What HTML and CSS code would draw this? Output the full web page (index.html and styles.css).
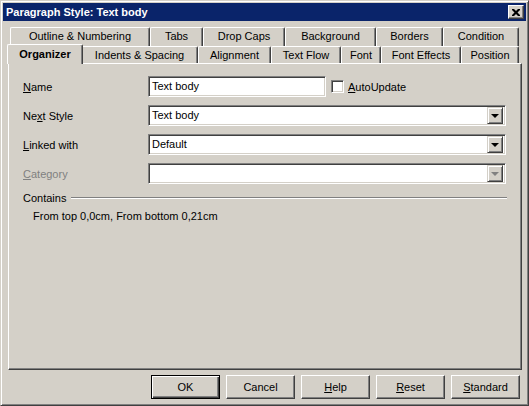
FILE: index.html
```html
<!DOCTYPE html>
<html lang="en">
<head>
    <meta charset="UTF-8">
    <title>Paragraph Style: Text body</title>
    <link rel="stylesheet" href="styles.css">
</head>
<body>
    <div class="window">
        <div class="titlebar">
            <span class="title">Paragraph Style: Text body</span>
            <button class="close" aria-label="Close">
                <svg width="8" height="7" viewBox="0 0 8 7">
                    <path d="M0 0h2l2 2 2-2h2v1l-2.5 2.5L8 6v1H6L4 5 2 7H0V6l2.5-2.5L0 1z" fill="#000"/>
                </svg>
            </button>
        </div>

        <div class="tabs">
            <div class="tabrow back">
                <div class="tab" style="width:140px">Outline &amp; Numbering</div>
                <div class="tab" style="width:53px">Tabs</div>
                <div class="tab" style="width:82px">Drop Caps</div>
                <div class="tab" style="width:91px">Background</div>
                <div class="tab" style="width:67px">Borders</div>
                <div class="tab" style="width:76px">Condition</div>
            </div>
            <div class="tabrow front">
                <div class="tab active" style="width:72px">Organizer</div>
                <div class="tab" style="width:117px">Indents &amp; Spacing</div>
                <div class="tab" style="width:73px">Alignment</div>
                <div class="tab" style="width:70px">Text Flow</div>
                <div class="tab" style="width:40px">Font</div>
                <div class="tab" style="width:80px">Font Effects</div>
                <div class="tab" style="width:58px">Position</div>
            </div>
        </div>

        <div class="panel">
            <div class="form">
                <label class="label"><u>N</u>ame</label>
                <div class="name-row">
                    <div class="field name">Text body</div>
                    <span class="check"></span>
                    <span class="check-label"><u>A</u>utoUpdate</span>
                </div>

                <label class="label">Ne<u>x</u>t Style</label>
                <div class="field combo">
                    <span class="value">Text body</span>
                    <span class="drop"><i class="arrow"></i></span>
                </div>

                <label class="label"><u>L</u>inked with</label>
                <div class="field combo">
                    <span class="value">Default</span>
                    <span class="drop"><i class="arrow"></i></span>
                </div>

                <label class="label disabled"><u>C</u>ategory</label>
                <div class="field combo">
                    <span class="value"></span>
                    <span class="drop"><i class="arrow off"></i></span>
                </div>
            </div>

            <div class="group">
                <span>Contains</span>
                <span class="rule"></span>
            </div>
            <p class="contains">From top 0,0cm, From bottom 0,21cm</p>
        </div>

        <div class="buttons">
            <button class="btn default">OK</button>
            <button class="btn">Cancel</button>
            <button class="btn"><u>H</u>elp</button>
            <button class="btn"><u>R</u>eset</button>
            <button class="btn"><u>S</u>tandard</button>
        </div>
    </div>
</body>
</html>
```

FILE: styles.css
```css
body {
    margin: 0;
    font-family: "Liberation Sans", Arial, sans-serif;
    font-size: 11px;
    color: #000;
    background: #d4d0c8;
}
u {
    text-decoration: underline;
    text-underline-offset: 1px;
}

/* window frame */
.window {
    width: 529px;
    height: 406px;
    box-sizing: border-box;
    padding: 2px;
    background: #d4d0c8;
    border: 1px solid;
    border-color: #d4d0c8 #404040 #404040 #d4d0c8;
    box-shadow: inset 1px 1px #fff, inset -1px -1px #808080;
}
.titlebar {
    height: 18px;
    background: #0a246a;
    display: flex;
    align-items: center;
    justify-content: space-between;
    padding: 0 2px 0 3px;
}
.title {
    color: #fff;
    font-weight: bold;
    font-size: 11px;
}
.close {
    width: 16px;
    height: 14px;
    padding: 0;
    display: flex;
    align-items: center;
    justify-content: center;
    background: #d4d0c8;
    border: 1px solid;
    border-color: #fff #404040 #404040 #fff;
    box-shadow: inset -1px -1px #808080;
}

/* tab strip */
.tabs {
    margin-top: 6px;
}
.tabrow {
    display: flex;
}
.tabrow.back {
    margin-left: 7px;
}
.tabrow.front {
    margin-left: 6px;
}
.tab {
    box-sizing: border-box;
    background: #d4d0c8;
    border-top: 1px solid #fff;
    border-left: 1px solid #fff;
    border-right: 1px solid #404040;
    box-shadow: inset -1px 0 #808080;
    border-radius: 2px 2px 0 0;
    text-align: center;
    white-space: nowrap;
}
.back .tab {
    height: 19px;
    line-height: 17px;
}
.front .tab {
    height: 17px;
    line-height: 16px;
}
.front .tab.active {
    position: relative;
    z-index: 1;
    height: 20px;
    margin: -2px -2px -1px;
    padding-bottom: 1px;
    line-height: 18px;
    font-weight: bold;
    width: 76px !important;
}

/* page body */
.panel {
    box-sizing: border-box;
    width: 514px;
    height: 307px;
    margin-left: 5px;
    padding: 12px 14px 0;
    border: 1px solid;
    border-color: #fff #404040 #404040 #fff;
    box-shadow: inset -1px -1px #808080;
}
.form {
    display: grid;
    grid-template-columns: 125px 358px;
    grid-auto-rows: 21px;
    row-gap: 8px;
    align-items: center;
}
.label.disabled {
    color: #808080;
}
.name-row {
    display: flex;
    align-items: center;
    height: 21px;
}
.field {
    box-sizing: border-box;
    height: 21px;
    background: #fff;
    border: 1px solid;
    border-color: #808080 #fff #fff #808080;
    box-shadow: inset 1px 1px #404040, inset -1px -1px #d4d0c8;
    padding: 0 3px;
    line-height: 19px;
}
.field.name {
    width: 178px;
}
.check {
    width: 13px;
    height: 13px;
    box-sizing: border-box;
    margin-left: 5px;
    background: #fff;
    border: 1px solid;
    border-color: #808080 #fff #fff #808080;
    box-shadow: inset 1px 1px #404040, inset -1px -1px #d4d0c8;
}
.check-label {
    margin-left: 4px;
}
.field.combo {
    display: flex;
    align-items: center;
    padding: 0 2px 0 3px;
}
.combo .value {
    flex: 1;
}
.drop {
    box-sizing: border-box;
    width: 16px;
    height: 17px;
    display: flex;
    align-items: center;
    justify-content: center;
    background: #d4d0c8;
    border: 1px solid;
    border-color: #d4d0c8 #404040 #404040 #d4d0c8;
    box-shadow: inset 1px 1px #fff, inset -1px -1px #808080;
}
.arrow {
    width: 0;
    height: 0;
    border-left: 4px solid transparent;
    border-right: 4px solid transparent;
    border-top: 4px solid #000;
}
.arrow.off {
    border-top-color: #808080;
}

.group {
    display: flex;
    align-items: center;
    margin-top: 7px;
    height: 13px;
}
.rule {
    flex: 1;
    margin-left: 5px;
    border-top: 1px solid #808080;
    border-bottom: 1px solid #fff;
}
.contains {
    margin: 6px 0 0 10px;
}

/* dialog buttons */
.buttons {
    display: flex;
    justify-content: flex-end;
    gap: 6px;
    margin-top: 5px;
    padding-right: 6px;
}
.btn {
    box-sizing: border-box;
    width: 69px;
    height: 24px;
    padding: 0;
    font: inherit;
    background: #d4d0c8;
    border: 1px solid;
    border-color: #fff #404040 #404040 #fff;
    box-shadow: inset -1px -1px #808080;
}
.btn.default {
    border: 1px solid #000;
    box-shadow: inset 1px 1px #fff, inset -1px -1px #404040, inset -2px -2px #808080;
}
```
